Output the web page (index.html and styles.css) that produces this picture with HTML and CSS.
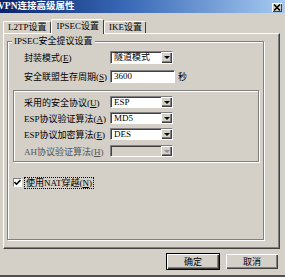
FILE: index.html
```html
<!DOCTYPE html>
<html>
<head>
  <meta charset="UTF-8">
  <title>VPN连接高级属性</title>
  <link rel="stylesheet" href="styles.css">
</head>
<body>
<div class="window">
  <div class="titlebar">
    <span class="title">VPN连接高级属性</span>
    <span class="close">
      <svg width="8" height="7" viewBox="0 0 8 7"><path d="M1 0.5 L7 6.5 M7 0.5 L1 6.5" stroke="#000" stroke-width="1.5"/></svg>
    </span>
  </div>

  <div class="tabs">
    <div class="tab">L2TP设置</div>
    <div class="tab active">IPSEC设置</div>
    <div class="tab">IKE设置</div>
  </div>

  <div class="panel">
    <div class="group">
      <div class="legend">IPSEC安全提议设置</div>

      <div class="row row-first">
        <label>封装模式(<u>E</u>)</label>
        <div class="select"><span class="value">隧道模式</span><span class="arrow"></span></div>
      </div>

      <div class="row row-second">
        <label>安全联盟生存周期(<u>S</u>)</label>
        <div class="input">3600</div>
        <span class="unit">秒</span>
      </div>

      <div class="inner">
        <div class="row r1">
          <label>采用的安全协议(<u>U</u>)</label>
          <div class="select"><span class="value">ESP</span><span class="arrow"></span></div>
        </div>
        <div class="row r2">
          <label>ESP协议验证算法(<u>A</u>)</label>
          <div class="select"><span class="value">MD5</span><span class="arrow"></span></div>
        </div>
        <div class="row r3">
          <label>ESP协议加密算法(<u>E</u>)</label>
          <div class="select"><span class="value">DES</span><span class="arrow"></span></div>
        </div>
        <div class="row r4 disabled">
          <label>AH协议验证算法(<u>H</u>)</label>
          <div class="select"><span class="value"></span><span class="arrow"></span></div>
        </div>
      </div>

      <div class="check-row">
        <span class="checkbox">
          <svg width="7" height="7" viewBox="0 0 7 7"><path d="M0.5 3 L2.5 5.2 L6.5 1" stroke="#000" stroke-width="1.6" fill="none"/></svg>
        </span>
        <span class="check-label">使用NAT穿越(<u>N</u>)</span>
      </div>
    </div>
  </div>

  <div class="buttons">
    <button class="btn default">确定</button>
    <button class="btn">取消</button>
  </div>
</div>
</body>
</html>
```

FILE: styles.css
```css
* {
  box-sizing: border-box;
}

body {
  margin: 0;
  padding: 0;
  background-color: #d4d0c8;
  font-family: "Liberation Serif", "Noto Sans CJK SC", serif;
  font-size: 9px;
  color: #000;
}

.window {
  width: 285px;
  height: 277px;
  border-bottom: 2px solid #505050;
  overflow: hidden;
}

.titlebar {
  height: 13px;
  display: flex;
  justify-content: space-between;
  align-items: center;
  background: linear-gradient(to right, #0a246a, #3a6ab8 45%, #a6caf0);
  padding-right: 3px;
}

.title {
  margin-left: -2px;
  color: #fff;
  font-weight: bold;
  font-size: 9.5px;
  line-height: 13px;
}

.close {
  width: 10px;
  height: 9px;
  margin-top: 2px;
  display: flex;
  align-items: center;
  justify-content: center;
  background-color: #d4d0c8;
  box-shadow: inset 1px 1px #fff, inset -1px -1px #404040;
}

.tabs {
  display: flex;
  align-items: flex-end;
  height: 14px;
  margin-top: 6px;
  padding-left: 3px;
  position: relative;
  z-index: 1;
}

.tab {
  height: 12px;
  line-height: 11px;
  padding: 0 3px 0 4px;
  border-left: 1px solid #fff;
  border-top: 1px solid #fff;
  border-right: 1px solid #404040;
  border-radius: 2px 2px 0 0;
}

.tab.active {
  height: 15px;
  margin-bottom: -1px;
  padding: 0 4px 0 5px;
  line-height: 13px;
  background-color: #d4d0c8;
}

.panel {
  width: 277px;
  height: 216px;
  margin-left: 3px;
  padding: 7px 0 0 3px;
  border-left: 1px solid #fff;
  border-top: 1px solid #fff;
  border-right: 1px solid #404040;
  border-bottom: 1px solid #404040;
  box-shadow: inset -1px -1px #808080;
}

.group {
  position: relative;
  width: 257px;
  height: 199px;
  border: 1px solid #808080;
  box-shadow: inset 1px 1px #fff, 1px 1px #fff;
}

.legend {
  position: absolute;
  top: -7px;
  left: 4px;
  padding: 0 2px;
  background-color: #d4d0c8;
  line-height: 12px;
}

.row {
  display: flex;
  align-items: center;
  height: 13px;
}

.row label {
  width: 86px;
  flex: none;
  white-space: nowrap;
}

.row-first {
  margin-top: 9px;
  padding-left: 16px;
}

.row-second {
  margin-top: 6px;
  padding-left: 16px;
}

.select,
.input {
  height: 13px;
  background-color: #fff;
  border-top: 1px solid #808080;
  border-left: 1px solid #808080;
  border-bottom: 1px solid #fff;
  border-right: 1px solid #fff;
  box-shadow: inset 1px 1px #404040;
}

.select {
  width: 63px;
  display: flex;
  justify-content: space-between;
}

.value {
  padding-left: 3px;
  line-height: 11px;
}

.arrow {
  width: 11px;
  height: 11px;
  display: flex;
  align-items: center;
  justify-content: center;
  background-color: #d4d0c8;
  box-shadow: inset 1px 1px #fff, inset -1px -1px #404040, inset -2px -2px #808080;
}

.arrow::after {
  content: "";
  border-top: 3px solid #000;
  border-left: 3px solid transparent;
  border-right: 3px solid transparent;
}

.input {
  width: 65px;
  padding-left: 3px;
  line-height: 11px;
}

.unit {
  margin-left: 3px;
  font-family: "Noto Sans CJK SC", sans-serif;
}

.inner {
  width: 246px;
  height: 72px;
  margin: 7px 0 0 5px;
  border: 1px solid #808080;
  box-shadow: inset 1px 1px #fff, 1px 1px #fff;
}

.inner .row {
  padding-left: 10px;
  height: 12px;
}

.inner .select {
  height: 12px;
}

.inner .arrow {
  height: 10px;
}

.r1 {
  margin-top: 5px;
}

.r2 {
  margin-top: 4px;
}

.r3 {
  margin-top: 4px;
}

.r4 {
  margin-top: 5px;
}

.disabled label {
  color: #555;
}

.disabled .select {
  background-color: #d4d0c8;
}

.disabled .arrow::after {
  border-top-color: #909090;
}

.check-row {
  display: flex;
  align-items: center;
  margin-top: 15px;
  padding-left: 5px;
  height: 11px;
}

.checkbox {
  width: 9px;
  height: 9px;
  display: flex;
  align-items: center;
  justify-content: center;
  background-color: #fff;
  border-top: 1px solid #808080;
  border-left: 1px solid #808080;
  border-bottom: 1px solid #fff;
  border-right: 1px solid #fff;
}

.check-label {
  margin-left: 3px;
  padding: 0 1px;
  line-height: 10px;
  outline: 1px dotted #000;
}

.buttons {
  display: flex;
  justify-content: flex-end;
  gap: 5px;
  margin-top: 4px;
  padding-right: 6px;
}

.btn {
  height: 17px;
  width: 54px;
  padding: 0;
  font-family: "Noto Sans CJK SC", sans-serif;
  font-size: 9px;
  line-height: 15px;
  color: #000;
  background-color: #d4d0c8;
  border: 1px solid #d4d0c8;
  box-shadow: inset 1px 1px #fff, inset -1px -1px #404040, inset -2px -2px #808080;
}

.btn.default {
  border: 1px solid #000;
}
```
